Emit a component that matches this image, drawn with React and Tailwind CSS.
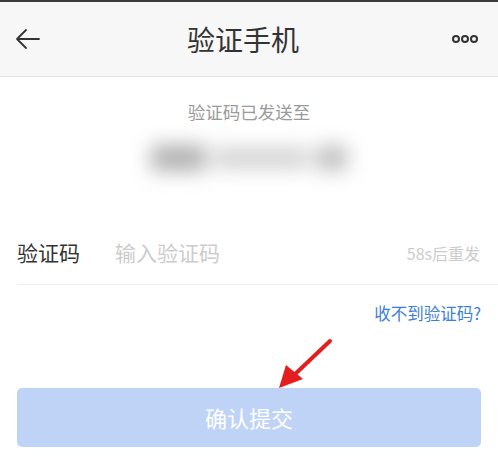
import React from 'react'

const font = { fontFamily: '"Noto Sans CJK SC", "Noto Sans", sans-serif' }

const App = () => {
  return (
    <div className="w-[498px] h-[461px] bg-white relative overflow-hidden" style={font}>
      <div className="h-[2px] bg-[#3a3a3a]"></div>
      <div className="h-[75px] bg-[#f7f7f7] border-b border-[#e4e4e4] flex items-center justify-between px-[14px]">
        <svg width="28" height="28" viewBox="0 0 28 28" fill="none" stroke="#333" strokeWidth="1.8" strokeLinecap="round" strokeLinejoin="round">
          <path d="M25 14H3M12 5L3 14l9 9" />
        </svg>
        <h1 className="text-[28px] text-[#333] leading-none pr-[8px]">验证手机</h1>
        <div className="flex gap-[1px] pr-[6px]">
          <span className="w-[8px] h-[8px] rounded-full border-[2px] border-[#333]"></span>
          <span className="w-[8px] h-[8px] rounded-full border-[2px] border-[#333]"></span>
          <span className="w-[8px] h-[8px] rounded-full border-[2px] border-[#333]"></span>
        </div>
      </div>
      <div className="flex flex-col items-center pt-[26px]">
        <p className="text-[17.5px] text-[#9a9a9a] leading-none">验证码已发送至</p>
        <div className="mt-[24px] flex items-center gap-[8px] blur-[10px]">
          <div className="w-[55px] h-[26px] bg-[#b0b0b0] rounded"></div>
          <div className="w-[95px] h-[20px] bg-[#d0d0d0] rounded"></div>
          <div className="w-[30px] h-[24px] bg-[#bbbbbb] rounded"></div>
        </div>
      </div>
      <div className="mt-[52px] ml-[17px] h-[62px] border-b border-[#efefef] flex items-center pr-[18px]">
        <span className="text-[21px] text-[#333] w-[98px]">验证码</span>
        <span className="text-[21px] text-[#cccccc] flex-1">输入验证码</span>
        <span className="text-[16px] text-[#cccccc]">58s后重发</span>
      </div>
      <div className="flex justify-end pr-[17px] pt-[16px]">
        <span className="text-[16.5px] text-[#3d7fd6]">收不到验证码?</span>
      </div>
      <div className="mt-[63px] mx-[17px] h-[59px] rounded-[5px] bg-[#bfd3f7] flex items-center justify-center">
        <span className="text-[22px] text-white">确认提交</span>
      </div>
      <svg className="absolute left-[270px] top-[332px]" width="70" height="65" viewBox="0 0 70 65">
        <line x1="60" y1="9" x2="22" y2="45" stroke="#e41e1e" strokeWidth="4" strokeLinecap="round" />
        <polygon points="9,56 16,33 33,47" fill="#e41e1e" />
      </svg>
    </div>
  )
}

export default App
